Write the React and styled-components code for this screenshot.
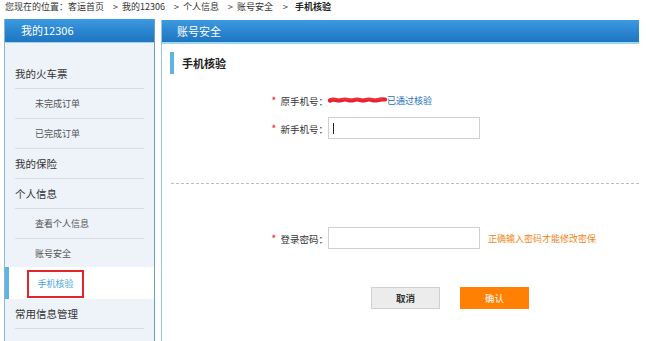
import styled, { createGlobalStyle, css } from "styled-components";

const GlobalStyle = createGlobalStyle`
  body {
    margin: 0;
    background: #fff;
    font-family: "Noto Sans CJK SC", "Liberation Sans", sans-serif;
    color: #333;
  }
`;

const menu = [
  { text: "我的火车票" },
  { text: "未完成订单", sub: true },
  { text: "已完成订单", sub: true },
  { text: "我的保险" },
  { text: "个人信息" },
  { text: "查看个人信息", sub: true },
  { text: "账号安全", sub: true },
  { text: "手机核验", sub: true, active: true },
  { text: "常用信息管理" },
];

const crumbs = ["我的12306", "个人信息", "账号安全"];

// redacted phone number: a flat red marker smear
const Scribble = () => (
  <svg width="59" height="8" viewBox="0 0 59 8">
    <path
      d="M2 4.5 Q5 3 8 4 T14 4 T20 4 T26 4 T32 4 T38 4 T44 4 T50 4 T57 3.5"
      fill="none"
      stroke="#e8222c"
      strokeWidth="4.2"
      strokeLinecap="round"
    />
    <path d="M3 3 L55 3" stroke="#f0565c" strokeWidth="1" opacity="0.6" />
  </svg>
);

const App = () => {
  return (
    <Page>
      <GlobalStyle />
      <Breadcrumb>
        您现在的位置：客运首页
        {crumbs.map((c) => (
          <Crumb key={c}>
            <Arrow>&gt;</Arrow>
            {c}
          </Crumb>
        ))}
        <Crumb>
          <Arrow $wide>&gt;</Arrow>
          <b>手机核验</b>
        </Crumb>
      </Breadcrumb>

      <Columns>
        <Sidebar>
          <SideHeader>我的12306</SideHeader>
          <Menu>
            {menu.map((m) => (
              <MenuItem key={m.text} $active={m.active}>
                <MenuText $sub={m.sub} $active={m.active}>
                  {m.active ? <ActiveBox>{m.text}</ActiveBox> : m.text}
                </MenuText>
              </MenuItem>
            ))}
          </Menu>
        </Sidebar>

        <Panel>
          <PanelHeader>账号安全</PanelHeader>
          <SectionTitle>手机核验</SectionTitle>

          <Row $top={15}>
            <Label>
              <Star>*</Star>原手机号：
            </Label>
            <Scribble />
            <Verified>已通过核验</Verified>
          </Row>
          <Row $top={6}>
            <Label>
              <Star>*</Star>新手机号：
            </Label>
            <InputBox>
              <Caret />
            </InputBox>
          </Row>

          <Divider />

          <Row $top={43}>
            <Label>
              <Star>*</Star>登录密码：
            </Label>
            <InputBox />
            <Hint>正确输入密码才能修改密保</Hint>
          </Row>

          <Buttons>
            <Button>取消</Button>
            <Button $primary>确认</Button>
          </Buttons>
        </Panel>
      </Columns>
    </Page>
  );
};

export default App;

const Page = styled.div`
  width: 654px;
  height: 341px;
  overflow: hidden;
`;

const Breadcrumb = styled.div`
  height: 19px;
  padding-left: 5px;
  font-size: 9px;
  line-height: 14px;
  color: #333;
  white-space: nowrap;

  b {
    font-weight: 700;
    color: #222;
  }
`;

const Crumb = styled.span``;

const Arrow = styled.span`
  margin: 0 ${(p) => (p.$wide ? "7px" : "4px")} 0
    ${(p) => (p.$wide ? "10px" : "9px")};
`;

const Columns = styled.div`
  display: flex;
  gap: 6px;
  padding-left: 4px;
`;

const Sidebar = styled.div`
  width: 149px;
  height: 322px;
  background: #eef2f9;
  border-left: 1px solid #8fb6da;
  border-right: 1px solid #6f9dca;
`;

const headerBg = css`
  background: linear-gradient(#3c9be0, #2a84cf 55%, #1f76c1);
  color: #fff;
  font-size: 11px;
  height: 23px;
  line-height: 23px;
  border-bottom: 1px solid #9bd3f1;
`;

const SideHeader = styled.div`
  ${headerBg}
  padding-left: 16px;
`;

const Menu = styled.div`
  padding-top: 16px;
`;

const MenuItem = styled.div`
  padding: 0 10px 0 10px;
  ${(p) =>
    p.$active &&
    css`
      background: #fff;
      box-shadow: inset 4px 0 0 #5cb6e0;
      margin-top: -2px;
      padding-top: 2px;
    `}
`;

const MenuText = styled.div`
  height: 29px;
  line-height: 29px;
  border-bottom: 1px solid ${(p) => (p.$active ? "transparent" : "#d8dee7")};
  font-size: ${(p) => (p.$sub ? "9px" : "10.5px")};
  color: ${(p) => (p.$sub ? "#555" : "#333")};
  padding-left: ${(p) => (p.$sub ? "20px" : "0")};
  display: flex;
  align-items: center;
`;

const ActiveBox = styled.span`
  display: inline-flex;
  align-items: center;
  justify-content: center;
  margin-left: -8px;
  width: 53px;
  height: 24px;
  border: 2px solid #e0262b;
  color: #4aa8de;
`;

const Panel = styled.div`
  width: 477px;
  height: 321px;
  margin-top: 1px;
  border-left: 1px solid #99c3e2;
`;

const PanelHeader = styled.div`
  ${headerBg}
  padding-left: 15px;
  border-bottom: 2px solid #9bd6f3;
  height: 22px;
  line-height: 22px;
`;

const SectionTitle = styled.div`
  margin: 8px 0 0 8px;
  height: 22px;
  line-height: 22px;
  padding-left: 8px;
  border-left: 4px solid #5cb6e0;
  font-size: 11px;
  font-weight: 700;
  color: #222;
`;

const Row = styled.div`
  display: flex;
  align-items: center;
  height: 22px;
  margin-top: ${(p) => p.$top}px;
`;

const Label = styled.div`
  width: 166px;
  text-align: right;
  font-size: 9.5px;
  color: #333;
  white-space: nowrap;
`;

const Star = styled.span`
  color: #e8262f;
  font-size: 11px;
  margin-right: 4px;
`;

const Verified = styled.span`
  font-size: 9px;
  color: #1b6fc4;
`;

const InputBox = styled.div`
  box-sizing: border-box;
  width: 152px;
  height: 22px;
  border: 1px solid #cfcfcf;
  background: #fff;
  display: flex;
  align-items: center;
  padding-left: 4px;
`;

const Caret = styled.span`
  width: 1px;
  height: 11px;
  background: #222;
`;

const Hint = styled.span`
  margin-left: 8px;
  font-size: 9px;
  color: #f08519;
`;

const Divider = styled.div`
  margin: 44px 0 0 9px;
  border-top: 1px dashed #bdbdbd;
`;

const Buttons = styled.div`
  display: flex;
  gap: 20px;
  margin-top: 38px;
  padding-left: 209px;
`;

const Button = styled.div`
  box-sizing: border-box;
  width: 69px;
  height: 22px;
  display: flex;
  align-items: center;
  justify-content: center;
  font-size: 9.5px;
  ${(p) =>
    p.$primary
      ? css`
          background: #ff8002;
          color: #fff;
        `
      : css`
          background: #ececec;
          border: 1px solid #d0d0d0;
          color: #333;
          font-weight: 700;
        `}
`;
